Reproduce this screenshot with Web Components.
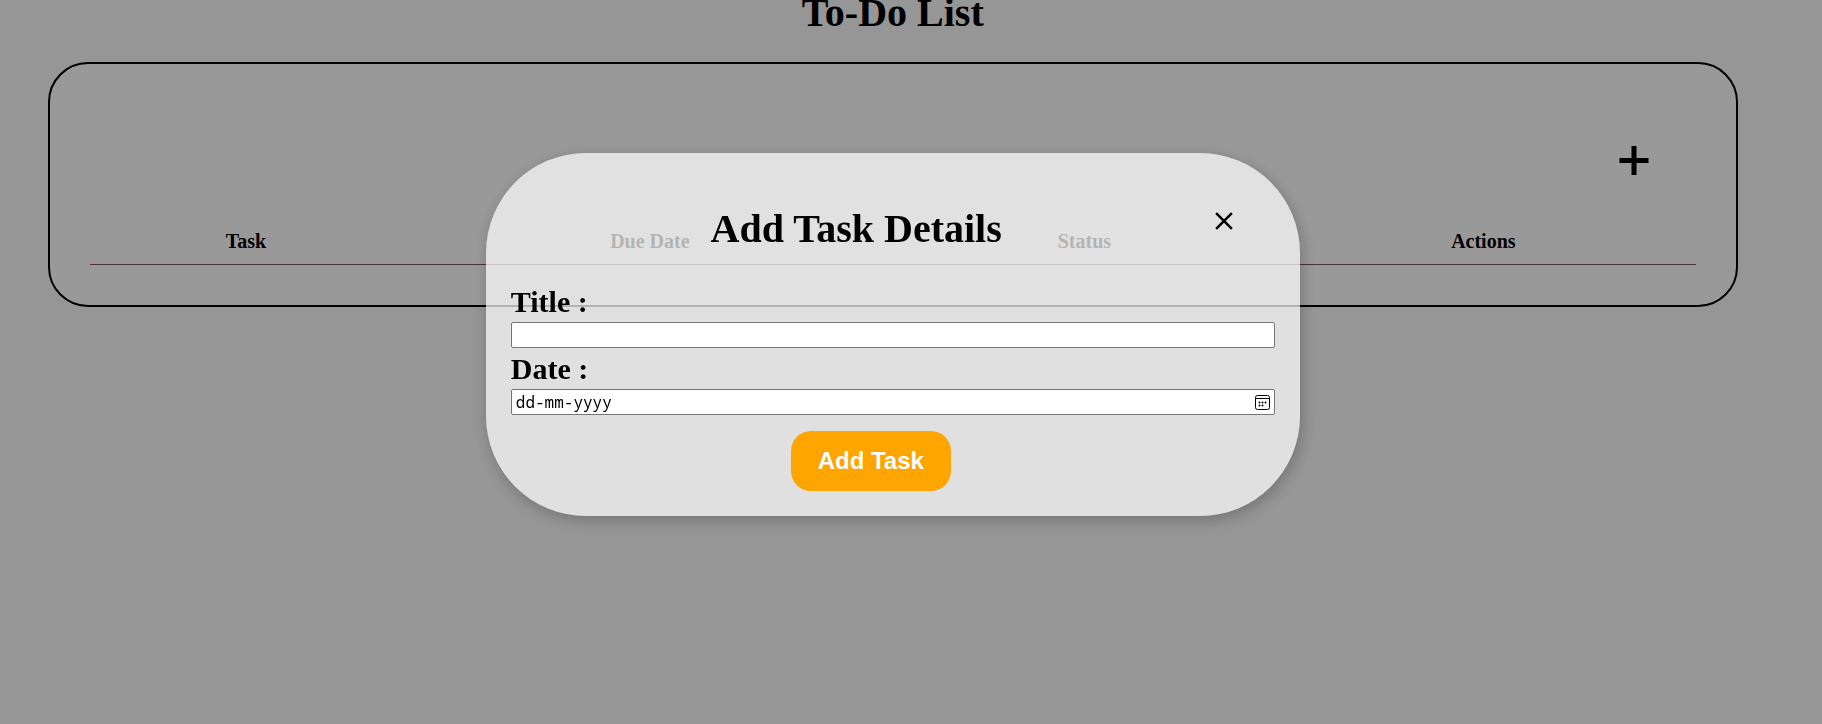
<!DOCTYPE html>
<html lang="en">
<head>
<meta charset="utf-8">
<meta name="viewport" content="width=device-width, initial-scale=1">
<title>To-Do List</title>
<style>
  html { background: #fafafa; }
  body { margin: 0; font-family: "Liberation Serif", "Times New Roman", serif; color: #000; }
</style>
</head>
<body>
<todo-app></todo-app>
<script>
  const define = (name, html, connected) => {
    const template = document.createElement('template');
    template.innerHTML = html;
    customElements.define(name, class extends HTMLElement {
      constructor() {
        super();
        this.attachShadow({ mode: 'open' }).append(template.content.cloneNode(true));
      }
      connectedCallback() {
        if (connected) connected(this, this.shadowRoot);
      }
    });
  };

  define('task-board', `
    <style>
      :host { display: block; box-sizing: border-box; padding: 40px; border: 2px solid #000; border-radius: 40px; background: #fff; }
      .tools { display: flex; justify-content: flex-end; padding: 32px 37px; }
      button { display: block; padding: 0; border: 0; background: none; color: inherit; cursor: pointer; }
      svg { display: block; width: 50px; height: 50px; }
      table { width: 100%; border-collapse: separate; border-spacing: 0; border-bottom: 1px solid #7d555a; }
      th { padding: 12px 12px 11px 13px; font-size: 20px; line-height: 23px; font-weight: bold; }
    </style>
    <div class="tools">
      <button type="button" aria-label="New task">
        <svg viewBox="0 0 50 50" aria-hidden="true"><path d="M10.5 24.5h29M25 10v29" fill="none" stroke="currentColor" stroke-width="5"/></svg>
      </button>
    </div>
    <table>
      <thead><tr><th scope="col">Task</th><th scope="col">Due Date</th><th scope="col">Status</th><th scope="col">Actions</th></tr></thead>
      <tbody></tbody>
    </table>`);

  // Labelled text box; label and placeholder come from attributes, a trailing control from the slot.
  define('task-field', `
    <style>
      :host { display: block; }
      label { display: block; margin-bottom: 3px; font-size: 30px; line-height: 34px; font-weight: bold; }
      .box { display: flex; box-sizing: border-box; height: 26px; border: 1px solid #767676; border-radius: 2px; background: #fff; align-items: center; padding: 0 4px; }
      input { flex: 1; min-width: 0; padding: 0; border: 0; outline: 0; background: none; color: #000; font: 16px "Noto Sans Mono", "DejaVu Sans Mono", "Liberation Mono", monospace; }
      input::placeholder { color: #000; opacity: 1; }
    </style>
    <label for="field"></label>
    <div class="box"><input id="field" type="text" autocomplete="off"><slot></slot></div>`,
    (host, root) => {
      root.querySelector('label').textContent = host.getAttribute('label');
      root.querySelector('input').placeholder = host.getAttribute('placeholder') || '';
    });

  define('task-dialog', `
    <style>
      :host { display: block; box-sizing: border-box; padding: 53px 25px 25px; border-radius: 100px; background: rgba(255,255,255,.7); box-shadow: 2px 4px 16px rgba(0,0,0,.24); }
      header { display: flex; justify-content: flex-end; align-items: flex-start; gap: 207px; padding-right: 36px; margin-bottom: 33px; }
      h2 { margin: 0; font-size: 40px; line-height: 46px; white-space: nowrap; }
      button { display: block; padding: 0; border: 0; background: none; color: #000; cursor: pointer; }
      svg { display: block; }
      form { display: flex; flex-direction: column; gap: 4px; }
      .actions { display: flex; justify-content: center; padding: 12px 44px 0 0; }
      .submit { width: 160px; height: 60px; border-radius: 20px; background: orange; color: #fff; font: bold 24px "Liberation Sans", Arial, sans-serif; }
    </style>
    <header>
      <h2>Add Task Details</h2>
      <button type="button" aria-label="Close">
        <svg width="30" height="30" viewBox="0 0 24 24" aria-hidden="true"><path fill="currentColor" d="M19 6.41 17.59 5 12 10.59 6.41 5 5 6.41 10.59 12 5 17.59 6.41 19 12 13.41 17.59 19 19 17.59 13.41 12z"/></svg>
      </button>
    </header>
    <form>
      <task-field label="Title :"></task-field>
      <task-field label="Date :" placeholder="dd-mm-yyyy">
        <button type="button" aria-label="Open calendar">
          <svg width="15" height="15" viewBox="0 0 15 15" aria-hidden="true">
            <rect x=".5" y=".5" width="14" height="14" rx="2" fill="none" stroke="currentColor"/>
            <path d="M1 3.5h13" stroke="currentColor"/>
            <g fill="currentColor"><circle cx="4.5" cy="7.5" r="1"/><circle cx="7.5" cy="7.5" r="1"/><circle cx="10.5" cy="7.5" r="1"/><circle cx="4.5" cy="10.5" r="1"/><circle cx="7.5" cy="10.5" r="1"/></g>
          </svg>
        </button>
      </task-field>
      <div class="actions"><button class="submit" type="submit">Add Task</button></div>
    </form>`);

  define('todo-app', `
    <style>
      :host { display: block; }
      main { box-sizing: border-box; width: 98%; padding: 0 48px 48px; }
      h1 { margin: -10px 0 26px; font-size: 40px; line-height: 46px; text-align: center; }
      .shade { position: fixed; inset: 0; box-sizing: border-box; padding: 153px 2% 0 0; background: rgba(0,0,0,.4); overflow: auto; }
      task-dialog { width: min(814px, 94%); margin: 0 auto; }
    </style>
    <main>
      <h1>To-Do List</h1>
      <task-board></task-board>
    </main>
    <div class="shade" role="dialog" aria-label="Add Task Details"><task-dialog></task-dialog></div>`);
</script>
</body>
</html>
